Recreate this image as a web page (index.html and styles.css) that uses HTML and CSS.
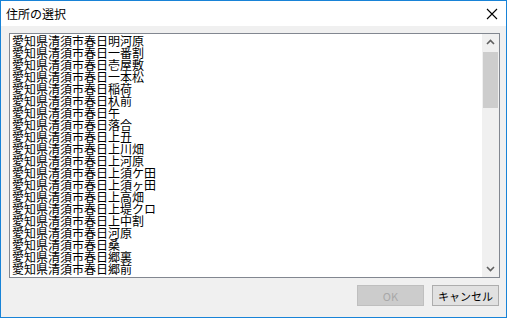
FILE: index.html
```html
<!DOCTYPE html>
<html lang="ja">

<head>
    <meta charset="UTF-8">
    <title>住所の選択</title>
    <link rel="stylesheet" href="styles.css">
</head>

<body>
    <div class="window">
        <div class="titlebar">
            <span class="title">住所の選択</span>
            <svg class="close" width="12" height="12" viewBox="0 0 12 12">
                <path d="M1 1 L11 11 M11 1 L1 11" stroke="#000" stroke-width="1.1" fill="none"/>
            </svg>
        </div>

        <div class="content">
            <div class="listbox">
                <ul class="address-list">
                    <li>愛知県清須市春日明河原</li>
                    <li>愛知県清須市春日一番割</li>
                    <li>愛知県清須市春日壱屋敷</li>
                    <li>愛知県清須市春日一本松</li>
                    <li>愛知県清須市春日稲荷</li>
                    <li>愛知県清須市春日杁前</li>
                    <li>愛知県清須市春日午</li>
                    <li>愛知県清須市春日落合</li>
                    <li>愛知県清須市春日上丑</li>
                    <li>愛知県清須市春日上川畑</li>
                    <li>愛知県清須市春日上河原</li>
                    <li>愛知県清須市春日上須ケ田</li>
                    <li>愛知県清須市春日上須ヶ田</li>
                    <li>愛知県清須市春日上高畑</li>
                    <li>愛知県清須市春日上堤クロ</li>
                    <li>愛知県清須市春日上中割</li>
                    <li>愛知県清須市春日河原</li>
                    <li>愛知県清須市春日桑</li>
                    <li>愛知県清須市春日郷裏</li>
                    <li>愛知県清須市春日郷前</li>
                </ul>
                <div class="scrollbar">
                    <svg class="arrow" width="17" height="17" viewBox="0 0 17 17">
                        <path d="M5 10 L8.5 6.5 L12 10" stroke="#606060" stroke-width="1.6" fill="none"/>
                    </svg>
                    <div class="track">
                        <div class="thumb"></div>
                    </div>
                    <svg class="arrow" width="17" height="17" viewBox="0 0 17 17">
                        <path d="M5 7 L8.5 10.5 L12 7" stroke="#606060" stroke-width="1.6" fill="none"/>
                    </svg>
                </div>
            </div>

            <div class="buttons">
                <button class="btn" disabled>OK</button>
                <button class="btn">キャンセル</button>
            </div>
        </div>
    </div>
</body>

</html>
```

FILE: styles.css
```css
html, body {
    margin: 0;
    padding: 0;
}

body {
    width: 507px;
    height: 318px;
    overflow: hidden;
    font-family: "Noto Sans CJK JP", "Noto Sans", sans-serif;
}

.window {
    box-sizing: border-box;
    width: 507px;
    height: 318px;
    border: 1px solid #1883d7;
    background-color: #f0f0f0;
    display: flex;
    flex-direction: column;
}

.titlebar {
    height: 25px;
    background-color: #fff;
    display: flex;
    align-items: center;
    padding: 0 8px 0 5px;
}

.title {
    font-size: 12px;
    color: #000;
    flex: 1;
}

.content {
    flex: 1;
    display: flex;
    flex-direction: column;
    padding: 7px 6px 0 8px;
}

.listbox {
    box-sizing: border-box;
    height: 245px;
    border: 1px solid #828790;
    background-color: #fff;
    display: flex;
}

.address-list {
    flex: 1;
    list-style: none;
    margin: 0;
    padding: 1px 0 0 2px;
    overflow: hidden;
}

.address-list li {
    font-size: 12px;
    line-height: 12px;
    height: 12px;
    color: #000;
    white-space: nowrap;
}

.scrollbar {
    width: 17px;
    background-color: #f0f0f0;
    display: flex;
    flex-direction: column;
}

.arrow {
    display: block;
    flex: 0 0 17px;
}

.track {
    flex: 1;
    padding: 1px 1px 0 1px;
}

.thumb {
    height: 56px;
    background-color: #cdcdcd;
}

.buttons {
    display: flex;
    justify-content: flex-end;
    gap: 8px;
    margin-top: 7px;
    padding-right: 1px;
}

.btn {
    box-sizing: border-box;
    width: 67px;
    height: 21px;
    padding: 0;
    font-family: "Noto Sans CJK JP", "Noto Sans", sans-serif;
    font-size: 11px;
    color: #000;
    background-color: #e1e1e1;
    border: 1px solid #adadad;
    border-radius: 0;
}

.btn:disabled {
    color: #a8a8a8;
    background-color: #cccccc;
    border-color: #bfbfbf;
}
```
